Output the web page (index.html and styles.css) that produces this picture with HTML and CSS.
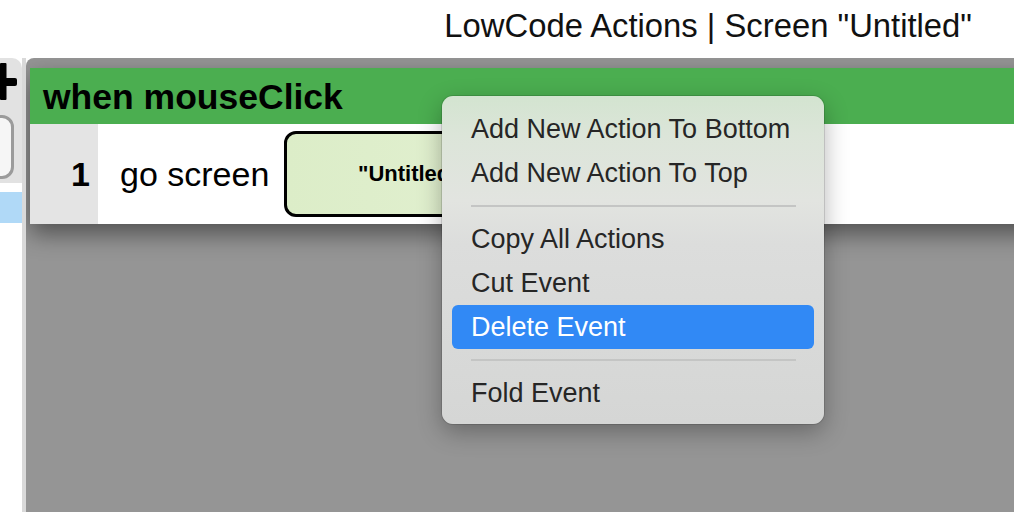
FILE: index.html
```html
<!DOCTYPE html>
<html lang="en">
<head>
  <meta charset="UTF-8">
  <meta name="viewport" content="width=device-width, initial-scale=1.0">
  <title>LowCode Actions</title>
  <link rel="stylesheet" href="styles.css">
</head>
<body>
  <div class="titlebar">LowCode Actions | Screen "Untitled"</div>

  <div class="workspace">
    <!-- left tool strip -->
    <div class="sidebar">
      <div class="tools">
        <svg class="plus" width="20" height="40" viewBox="0 0 20 40">
          <rect x="0" y="0" width="6.5" height="37" rx="1" fill="#000"/>
          <rect x="0" y="15" width="17" height="8" rx="2" fill="#000"/>
        </svg>
        <div class="tool-box"></div>
      </div>
      <div class="screen-item"></div>
    </div>
    <div class="divider"></div>

    <!-- event canvas -->
    <div class="canvas">
      <div class="event">
        <div class="event-head">when mouseClick</div>
        <div class="action-row">
          <div class="line-no">1</div>
          <div class="action-name">go screen</div>
          <div class="param">"Untitled"</div>
        </div>
      </div>
    </div>
  </div>

  <!-- context menu -->
  <div class="menu">
    <div class="menu-item">Add New Action To Bottom</div>
    <div class="menu-item">Add New Action To Top</div>
    <div class="menu-sep"></div>
    <div class="menu-item">Copy All Actions</div>
    <div class="menu-item">Cut Event</div>
    <div class="menu-item active">Delete Event</div>
    <div class="menu-sep"></div>
    <div class="menu-item">Fold Event</div>
  </div>
</body>
</html>
```

FILE: styles.css
```css
* {
  box-sizing: border-box;
}
body {
  margin: 0;
  background: #fff;
  font-family: 'Liberation Sans', Arial, sans-serif;
  color: #000;
  width: 1014px;
  height: 512px;
  overflow: hidden;
}
.titlebar {
  height: 58px;
  padding: 7px 42px 0 0;
  line-height: 38px;
  font-size: 32.8px;
  text-align: right;
  color: #111;
}
.workspace {
  display: flex;
  height: 454px;
}
.sidebar {
  width: 22px;
  flex-shrink: 0;
  overflow: hidden;
}
.tools {
  height: 125px;
  background: #e2e2e2;
  border-top-right-radius: 10px;
  padding-top: 5px;
  overflow: hidden;
}
.plus {
  display: block;
}
.tool-box {
  margin: 12px 0 0 -40px;
  width: 54px;
  height: 64px;
  border: 3px solid #9b9b9b;
  border-radius: 12px;
  background: #f6f6f6;
}
.screen-item {
  margin-top: 9px;
  height: 31px;
  background: #b0d9f7;
}
.divider {
  width: 4px;
  flex-shrink: 0;
  background: #d9d9d9;
}
.canvas {
  flex: 1;
  background: #959595;
  border-top-left-radius: 8px;
  padding: 10px 0 0 4px;
  overflow: hidden;
}
.event {
  width: 1100px;
  box-shadow: 0 10px 22px rgba(0, 0, 0, 0.45);
}
.event-head {
  height: 56px;
  background: #4bae50;
  padding: 3px 0 0 13px;
  line-height: 53px;
  font-size: 35.5px;
  font-weight: bold;
}
.action-row {
  display: flex;
  align-items: center;
  height: 100px;
  background: #fff;
}
.line-no {
  width: 68px;
  height: 100%;
  background: #e4e4e4;
  text-align: right;
  padding-right: 8px;
  line-height: 100px;
  font-size: 34px;
  font-weight: bold;
}
.action-name {
  margin-left: 22px;
  font-size: 34px;
}
.param {
  margin-left: 15px;
  width: 250px;
  height: 86px;
  border: 3.5px solid #000;
  border-radius: 12px;
  background: linear-gradient(90deg, #dcedc8, #e2f0d1);
  display: flex;
  align-items: center;
  justify-content: center;
  font-size: 22px;
  font-weight: bold;
}
.menu {
  position: absolute;
  left: 442px;
  top: 96px;
  width: 382px;
  height: 328px;
  padding: 11px 10px 9px;
  border-radius: 11px;
  background: linear-gradient(180deg, #d3e4d0 0%, #dce5d9 12%, #e2e4e0 32%, #dcdddc 45%, #d5d6d5 100%);
  box-shadow: 0 0 0 1px rgba(0, 0, 0, 0.12), 0 8px 24px rgba(0, 0, 0, 0.3);
  color: #262626;
}
.menu-item {
  height: 44px;
  line-height: 44px;
  padding-left: 19px;
  font-size: 27px;
  border-radius: 6px;
}
.menu-item.active {
  background: #3189f5;
  color: #fff;
}
.menu-sep {
  height: 2px;
  margin: 10px 18px 10px 19px;
  background: #c4c5c4;
}
```
